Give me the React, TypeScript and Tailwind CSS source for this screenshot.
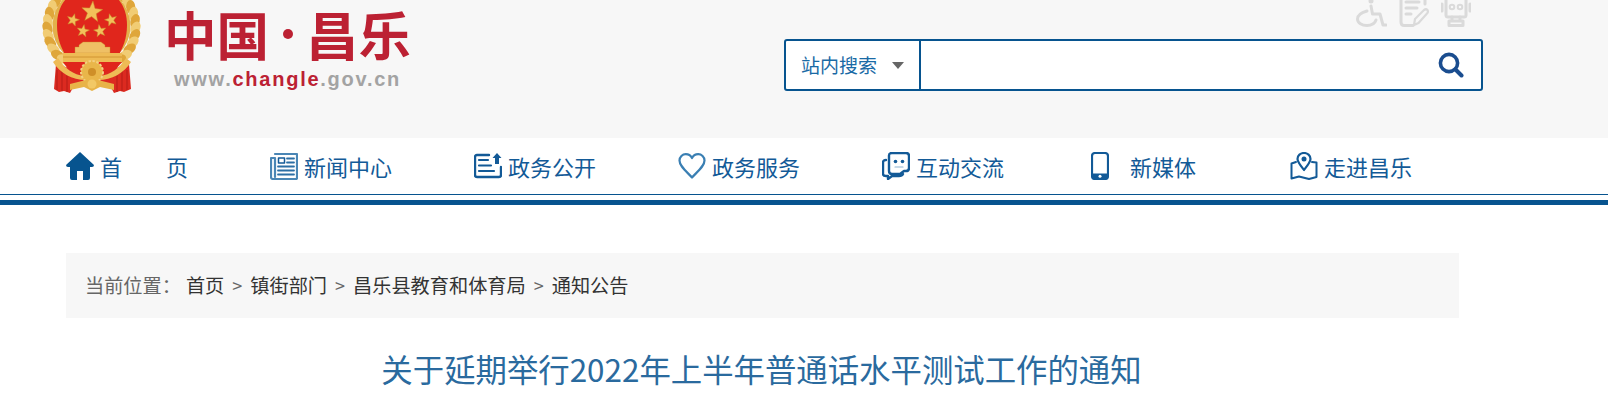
import React from "react";

const cjk = "font-['Microsoft_YaHei','Noto_Sans_CJK_SC',sans-serif]";

function Star({ x, y, r, rot = 0 }: { x: number; y: number; r: number; rot?: number }) {
  const pts: string[] = [];
  for (let i = 0; i < 10; i++) {
    const rad = i % 2 === 0 ? r : r * 0.42;
    const a = ((-90 + rot + i * 36) * Math.PI) / 180;
    pts.push(`${x + rad * Math.cos(a)},${y + rad * Math.sin(a)}`);
  }
  return <polygon points={pts.join(" ")} fill="#f2c05a" stroke="#c98a2a" strokeWidth="0.5" />;
}

function Emblem() {
  const leaves: React.ReactNode[] = [];
  for (let i = 0; i < 17; i++) {
    const deg = -65 + i * 9.5;
    const a = (deg * Math.PI) / 180;
    const r = i > 11 ? 44 - (i - 11) * 1.5 : 44;
    const cxR = 49.5 + r * Math.cos(a);
    const cxL = 49.5 - r * Math.cos(a);
    const cy = 27 + r * Math.sin(a);
    leaves.push(
      <ellipse key={`r${i}`} cx={cxR} cy={cy} rx="4.6" ry="7" fill={i % 2 ? "#f1cc74" : "#dfa63a"} transform={`rotate(${deg + 25} ${cxR} ${cy})`} />,
      <ellipse key={`l${i}`} cx={cxL} cy={cy} rx="4.6" ry="7" fill={i % 2 ? "#dfa63a" : "#f1cc74"} transform={`rotate(${-deg - 25} ${cxL} ${cy})`} />,
    );
  }
  return (
    <svg width="100" height="97" viewBox="0 0 100 97" className="shrink-0">
      <path d="M14 64 L46 74 L54 74 L87 64 L89 89 L82 92 L78 91 L72 93 L67 84 H33 L28 93 L22 91 L17 92 L12 89Z" fill="#dc2a20" />
      <path d="M15 70 V90 M20 70 V91 M25 72 V92 M75 72 V92 M80 70 V91 M85 70 V90" stroke="#b51c17" strokeWidth="1" />
      {leaves}
      <circle cx="49.5" cy="26" r="39" fill="#e3b04a" />
      <path d="M15 25 C15 2 30 -12 50 -12 C70 -12 85 2 85 25 C85 38 81 48 76 56 H24 C19 48 15 38 15 25Z" fill="#e0261c" />
      <Star x={50} y={12} r={11} rot={5} />
      <Star x={31} y={20} r={6.5} rot={15} />
      <Star x={69} y={20} r={6.5} rot={-15} />
      <Star x={41} y={31} r={6.5} rot={10} />
      <Star x={58} y={31} r={6.5} rot={-10} />
      <path d="M37 47 V45 L41 42 H59 L63 45 V47 H68 V53 H33 V47Z" fill="#efc065" stroke="#c98a2a" strokeWidth="0.4" />
      <rect x="21" y="53" width="59" height="9" fill="#eebb55" />
      <path d="M21 57 H80" stroke="#c98a2a" strokeWidth="0.8" />
      <path d="M21 62 H80 L74 69 L60 74 H40 L26 69Z" fill="#e0261c" />
      <path d="M16 58 C22 68 32 75 42 76 L44 80 C30 80 18 73 11 62Z M84 58 C78 68 68 75 58 76 L56 80 C70 80 82 73 89 62Z" fill="#eebb55" />
      <circle cx="50" cy="72" r="11" fill="#e9b64a" stroke="#f3d184" strokeWidth="2" strokeDasharray="2.4 1.6" />
      <circle cx="50" cy="72" r="4" fill="#cf8f28" />
      <path d="M28 84 L44 80 H56 L72 84 V90 L58 87 L50 91 L42 87 L28 90Z" fill="#e8b348" />
      <circle cx="50" cy="84" r="4.5" fill="#f2c865" />
    </svg>
  );
}

const stroke = { fill: "none", stroke: "#135a97", strokeWidth: 2, strokeLinejoin: "round" as const, strokeLinecap: "round" as const };

const icons: Record<string, React.ReactNode> = {
  home: (
    <svg width="28" height="28" viewBox="0 0 28 28"><path d="M14 0 L28 13 Q28 15 26 15 H24 V26 Q24 28 22 28 H17 V19 H11 V28 H6 Q4 28 4 26 V15 H2 Q0 15 0 13Z" fill="#07548f" /></svg>
  ),
  news: (
    <svg width="28" height="28" viewBox="0 0 28 28">
      <path d="M5 2 H27 V26 Q27 27 26 27 H3 Q1 27 1 25 V6 H5 V25" {...stroke} stroke="#4a86b5" strokeWidth="2.2" />
      <rect x="8.5" y="6" width="6" height="5" {...stroke} strokeWidth="1.5" />
      <path d="M17 6.5 H24 M17 10.5 H24 M8 14.5 H24 M8 18.5 H24 M8 22.5 H24" {...stroke} strokeWidth="1.8" stroke="#2c6fa5" />
    </svg>
  ),
  open: (
    <svg width="28" height="26" viewBox="0 0 28 26">
      <path d="M15 2 H3 Q1 2 1 4 V22 Q1 24 3 24 H25 Q27 24 27 22 V14" {...stroke} strokeWidth="2.4" />
      <path d="M5 7 H14 M5 12.5 H17 M5 18 H20" {...stroke} strokeWidth="2.2" />
      <path d="M23 0 L27.5 5 H25 V11 H21 V5 H18.5Z" fill="#135a97" />
    </svg>
  ),
  heart: (
    <svg width="28" height="26" viewBox="0 0 28 26">
      <path d="M14 24.5 C8 18 1.5 13 1.5 7.5 C1.5 3.8 4.5 1.2 7.8 1.2 C10.5 1.2 12.8 2.8 14 5 C15.2 2.8 17.5 1.2 20.2 1.2 C23.5 1.2 26.5 3.8 26.5 7.5 C26.5 13 20 18 14 24.5Z" {...stroke} stroke="#3a7fb3" strokeWidth="2.2" />
    </svg>
  ),
  chat: (
    <svg width="28" height="28" viewBox="0 0 28 28">
      <path d="M7 3.5 Q7 1 10 1 H24 Q27 1 27 4 V16 Q27 19 24 19 H22 L18 22 H10 Q7 22 7 19Z" {...stroke} strokeWidth="2.4" />
      <path d="M4 8 Q1 8 1 11 V22 Q1 24 4 24 H6 V27 L10 24 H17 Q20 24 21 22" {...stroke} strokeWidth="2.4" />
      <circle cx="13.5" cy="9.5" r="1.8" fill="#135a97" />
      <circle cx="20.5" cy="9.5" r="1.8" fill="#135a97" />
      <path d="M13 15 H21" {...stroke} stroke="#8db3d0" strokeWidth="1.2" />
    </svg>
  ),
  phone: (
    <svg width="18" height="28" viewBox="0 0 18 28">
      <rect x="1" y="1" width="16" height="26" rx="3" {...stroke} strokeWidth="2.2" />
      <path d="M1 21.5 H17 V24 Q17 27.5 14 27.5 H4 Q1 27.5 1 24Z" fill="#135a97" />
      <circle cx="9" cy="24.3" r="1.5" fill="#fff" />
    </svg>
  ),
  map: (
    <svg width="28" height="28" viewBox="0 0 28 28">
      <path d="M14 18 C10 13 7.5 10 7.5 7 C7.5 3.5 10.5 1 14 1 C17.5 1 20.5 3.5 20.5 7 C20.5 10 18 13 14 18Z" {...stroke} strokeWidth="2.2" />
      <circle cx="14" cy="7" r="2.5" fill="#135a97" />
      <path d="M6 10 L1.5 11.5 V26.5 L9 24.5 L19 27 L26.5 25 V10.5 L22 10" {...stroke} strokeWidth="2" />
    </svg>
  ),
};

const items = [
  { icon: "home", label: "首", label2: "页", text: "w-[34px]" },
  { icon: "news", label: "新闻中心", text: "w-[34px]" },
  { icon: "open", label: "政务公开", text: "w-[34px]" },
  { icon: "heart", label: "政务服务", text: "w-[34px]" },
  { icon: "chat", label: "互动交流", text: "w-[34px]" },
  { icon: "phone", label: "新媒体", text: "w-[44px] pl-[5px]" },
  { icon: "map", label: "走进昌乐", text: "w-[34px]" },
];

const soft = { fill: "none", stroke: "#dadada", strokeWidth: 3, strokeLinecap: "round" as const, strokeLinejoin: "round" as const };

function Topbar() {
  return (
    <header className="h-[138px] bg-[#f7f7f7] flex">
      <div className="ml-[42px] h-[97px]">
        <Emblem />
      </div>
      <div className="ml-[22px] flex flex-col">
        <div className="h-[67px] flex items-center text-[#bc2133] text-[52.5px] leading-[67px] font-bold whitespace-nowrap">
          <span>中国</span>
          <span className="w-[37px] flex justify-center">
            <span className="w-[10px] h-[10px] rounded-full bg-[#bc2133]" />
          </span>
          <span>昌乐</span>
        </div>
        <div className="ml-[10px] font-['Liberation_Sans',sans-serif] font-bold text-[20px] leading-[24px] tracking-[1.75px] text-[#a3a3a3] whitespace-nowrap">
          www.<span className="text-[#bc2133]">changle</span>.gov.cn
        </div>
      </div>
      <div className="ml-[373px] w-[699px] flex flex-col items-end">
        <div className="h-[39px] pr-[12px] flex items-start gap-[12px]">
          <svg width="31" height="27" viewBox="-3 0 31 27" {...soft}>
            <circle cx="12" cy="1" r="2.5" fill="#dadada" stroke="none" />
            <path d="M12 6 L13.5 14 H21 L24 25 H27" />
            <path d="M8 11 C1 13 -1.5 16 -1.5 19 C-1.5 23 3 25.5 8 25.5 C13 25.5 16 23 17 20" />
          </svg>
          <svg width="30" height="27" viewBox="0 0 30 27" {...soft}>
            <path d="M26 -2 V4 M2 -2 V22 Q2 25.5 5 25.5 H14" />
            <path d="M7 2 H20 M7 8 H18 M7 14 H12" />
            <path d="M15 25 L16 19 L25 10 Q27 8.5 28.5 10 Q29.5 12 28 13.5 L19.5 23Z" strokeWidth="2.2" />
          </svg>
          <svg width="30" height="27" viewBox="0 0 30 27" {...soft}>
            <path d="M5 -2 H25 V15 Q25 17 23 17 H7 Q5 17 5 15Z" />
            <circle cx="11" cy="7" r="2.3" strokeWidth="2" />
            <circle cx="19" cy="7" r="2.3" strokeWidth="2" />
            <path d="M1 4 V11 M29 4 V11 M11 17 V21 M19 17 V21 M8 21 H22 V25.5 H8Z" />
          </svg>
        </div>
        <div className="w-[699px] h-[52px] flex border-2 border-[#07548f] rounded-[3px] bg-white">
          <div className="w-[135px] border-r-2 border-[#07548f] flex items-center pl-[15px] text-[19px] text-[#1a6aa5] whitespace-nowrap">
            站内搜索
            <span className="ml-[15px] w-0 h-0 border-x-[6px] border-x-transparent border-t-[7px] border-t-[#666]" />
          </div>
          <div className="flex-1 flex items-center justify-end pr-[17px]">
            <svg width="26" height="26" viewBox="0 0 26 26" fill="none" stroke="#1a4d8f">
              <circle cx="11" cy="11" r="8.6" strokeWidth="3.6" />
              <path d="M17.5 17.5 L23.5 23.5" strokeWidth="4" strokeLinecap="round" />
            </svg>
          </div>
        </div>
      </div>
    </header>
  );
}

function Nav() {
  return (
    <nav className="h-[57px] pl-[66px] border-b border-[#07548f] bg-white">
      <ul className="flex h-full items-center">
        {items.map((it) => (
          <li key={it.label} className="w-[204px] flex items-center text-[#135a97] text-[22px] leading-[30px]">
            <span className={`${it.text} flex items-center shrink-0`}>{icons[it.icon]}</span>
            {it.label2 ? (
              <span className="w-[88px] flex justify-between">
                <span>{it.label}</span>
                <span>{it.label2}</span>
              </span>
            ) : (
              <span>{it.label}</span>
            )}
          </li>
        ))}
      </ul>
    </nav>
  );
}

export default function App() {
  return (
    <div className={`${cjk} w-[1608px] h-[406px] overflow-hidden bg-white`}>
      <Topbar />
      <Nav />
      <div className="mt-[5px] h-[5px] bg-[#07548f]" />
      <div className="mt-[48px] ml-[66px] w-[1393px] h-[65px] bg-[#f7f7f7] pl-[19px] flex items-center text-[19.2px] text-[#333] whitespace-nowrap">
        <span className="text-[#666] mr-[5px]">当前位置：</span>
        <span>首页</span>
        <span className="mx-[8px] text-[18px] text-[#666]">&gt;</span>
        <span>镇街部门</span>
        <span className="mx-[8px] text-[18px] text-[#666]">&gt;</span>
        <span>昌乐县教育和体育局</span>
        <span className="mx-[8px] text-[18px] text-[#666]">&gt;</span>
        <span>通知公告</span>
      </div>
      <h1 className="mt-[28px] w-[1523px] text-center text-[31.4px] leading-[46px] font-normal text-[#2a6a9e] whitespace-nowrap">
        关于延期举行2022年上半年普通话水平测试工作的通知
      </h1>
    </div>
  );
}
